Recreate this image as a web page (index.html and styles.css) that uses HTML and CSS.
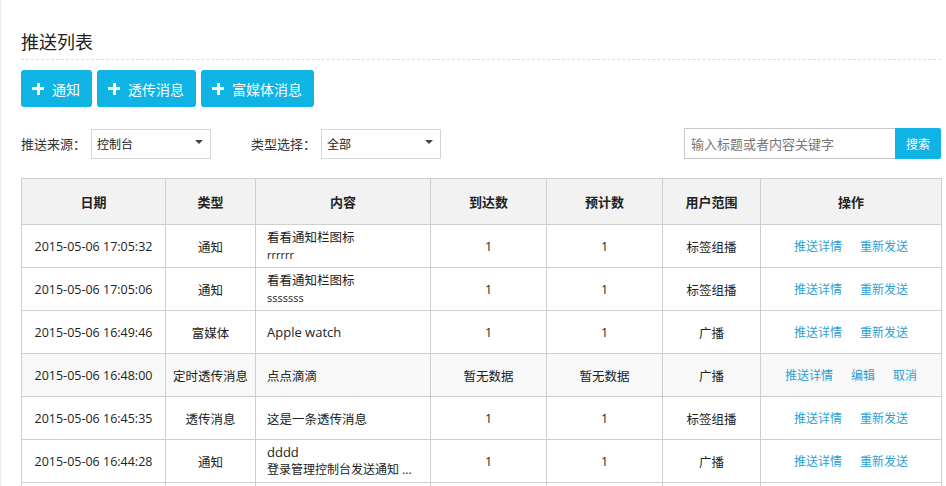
FILE: index.html
```html
<!DOCTYPE html>
<html lang="zh">
<head>
<meta charset="utf-8">
<link rel="stylesheet" href="styles.css">
</head>
<body>
<div class="page">
  <h2 class="title">推送列表</h2>
  <div class="actions">
    <button class="btn"><span class="plus"></span>通知</button>
    <button class="btn"><span class="plus"></span>透传消息</button>
    <button class="btn"><span class="plus"></span>富媒体消息</button>
  </div>
  <div class="filters">
    <label class="flabel">推送来源：</label>
    <div class="select"><span>控制台</span><i class="caret"></i></div>
    <label class="flabel second">类型选择：</label>
    <div class="select"><span>全部</span><i class="caret"></i></div>
    <div class="search">
      <input class="search-input" type="text" placeholder="输入标题或者内容关键字">
      <button class="search-btn">搜索</button>
    </div>
  </div>
  <table class="grid">
    <colgroup>
      <col class="c-date"><col class="c-type"><col class="c-content"><col class="c-num"><col class="c-num"><col class="c-range"><col class="c-op">
    </colgroup>
    <thead>
      <tr><th>日期</th><th>类型</th><th>内容</th><th>到达数</th><th>预计数</th><th>用户范围</th><th>操作</th></tr>
    </thead>
    <tbody>
      <tr>
        <td>2015-05-06 17:05:32</td><td>通知</td>
        <td class="content"><div class="l1">看看通知栏图标</div><div class="l2">rrrrrr</div></td>
        <td>1</td><td>1</td><td>标签组播</td>
        <td class="ops"><a>推送详情</a><a>重新发送</a></td>
      </tr>
      <tr>
        <td>2015-05-06 17:05:06</td><td>通知</td>
        <td class="content"><div class="l1">看看通知栏图标</div><div class="l2">sssssss</div></td>
        <td>1</td><td>1</td><td>标签组播</td>
        <td class="ops"><a>推送详情</a><a>重新发送</a></td>
      </tr>
      <tr>
        <td>2015-05-06 16:49:46</td><td>富媒体</td>
        <td class="content"><span class="latin">Apple watch</span></td>
        <td>1</td><td>1</td><td>广播</td>
        <td class="ops"><a>推送详情</a><a>重新发送</a></td>
      </tr>
      <tr class="muted">
        <td>2015-05-06 16:48:00</td><td>定时透传消息</td>
        <td class="content">点点滴滴</td>
        <td>暂无数据</td><td>暂无数据</td><td>广播</td>
        <td class="ops"><a>推送详情</a><a>编辑</a><a>取消</a></td>
      </tr>
      <tr>
        <td>2015-05-06 16:45:35</td><td>透传消息</td>
        <td class="content">这是一条透传消息</td>
        <td>1</td><td>1</td><td>标签组播</td>
        <td class="ops"><a>推送详情</a><a>重新发送</a></td>
      </tr>
      <tr>
        <td>2015-05-06 16:44:28</td><td>通知</td>
        <td class="content"><div class="l1 latin">dddd</div><div class="l1b">登录管理控制台发送通知 ...</div></td>
        <td>1</td><td>1</td><td>广播</td>
        <td class="ops"><a>推送详情</a><a>重新发送</a></td>
      </tr>
      <tr class="next">
        <td></td><td></td><td></td><td></td><td></td><td></td><td></td>
      </tr>
    </tbody>
  </table>
</div>
</body>
</html>
```

FILE: styles.css
```css
* { box-sizing: border-box; }
html, body { margin: 0; padding: 0; background: #fff; }
body {
  font-family: "Open Sans", "Noto Sans CJK SC", sans-serif;
  font-size: 12px;
  color: #333;
  overflow: hidden;
}
.page {
  border-left: 1px solid #ececec;
  padding: 26px 5px 0 20px;
  min-height: 486px;
}
.title {
  margin: 0;
  font-size: 18px;
  font-weight: normal;
  line-height: 32px;
  color: #222;
  border-bottom: 1px dashed #ddd;
  height: 34px;
}
.actions {
  display: flex;
  gap: 5px;
  margin-top: 10px;
}
.btn {
  display: flex;
  align-items: center;
  height: 37px;
  padding: 0 12px 0 11px;
  background: #0fb3e4;
  color: #fff;
  border: none;
  border-radius: 3px;
  font-family: inherit;
  font-size: 14px;
}
.plus {
  position: relative;
  width: 12px;
  height: 12px;
  margin-right: 8px;
}
.plus::before, .plus::after {
  content: "";
  position: absolute;
  background: #fff;
}
.plus::before { left: 0; top: 4.5px; width: 12px; height: 3px; }
.plus::after { left: 4.5px; top: 0; width: 3px; height: 12px; }
.filters {
  display: flex;
  align-items: center;
  margin-top: 21px;
  height: 31px;
}
.flabel { font-size: 13px; color: #333; margin-right: 5px; }
.flabel.second { margin-left: 40px; }
.select {
  display: flex;
  align-items: center;
  justify-content: space-between;
  width: 120px;
  height: 30px;
  border: 1px solid #d5d5d5;
  padding: 0 7px 0 5px;
  font-size: 12px;
  color: #222;
}
.caret {
  width: 0; height: 0;
  border-left: 4px solid transparent;
  border-right: 4px solid transparent;
  border-top: 4px solid #444;
  margin-top: -3px;
}
.search {
  display: flex;
  margin-left: auto;
  height: 31px;
}
.search-input {
  width: 211px;
  height: 31px;
  border: 1px solid #c8c8c8;
  border-right: none;
  padding: 0 6px;
  font-family: inherit;
  font-size: 13px;
  color: #333;
  outline: none;
}
.search-input::placeholder { color: #777; }
.search-btn {
  width: 46px;
  height: 31px;
  border: none;
  background: #0fb3e4;
  color: #fff;
  font-family: inherit;
  font-size: 12px;
  border-radius: 0 2px 2px 0;
  padding: 0;
}
.grid {
  margin-top: 19px;
  width: 920px;
  border-collapse: collapse;
  table-layout: fixed;
}
.c-date { width: 144px; }
.c-type { width: 90px; }
.c-content { width: 175px; }
.c-num { width: 116px; }
.c-range { width: 98px; }
.c-op { width: 181px; }
.grid th, .grid td {
  border: 1px solid #cfcfcf;
  text-align: center;
  vertical-align: middle;
  padding: 0;
}
.grid th {
  height: 46px;
  background: #f2f2f2;
  font-size: 13px;
  font-weight: bold;
  color: #222;
}
.grid td {
  height: 43px;
  font-size: 12.5px;
  color: #222;
}
.grid td.content {
  text-align: left;
  padding-left: 11px;
}
.latin { font-size: 13px; }
.l1 { line-height: 17px; }
.l2 { line-height: 17px; font-size: 11px; }
.l1b { line-height: 17px; font-size: 12px; }
.grid tr.muted td { background: #f8f8f8; }
.ops a {
  color: #2a9fd6;
  margin: 0 9px;
  font-size: 12px;
  cursor: pointer;
}
```
